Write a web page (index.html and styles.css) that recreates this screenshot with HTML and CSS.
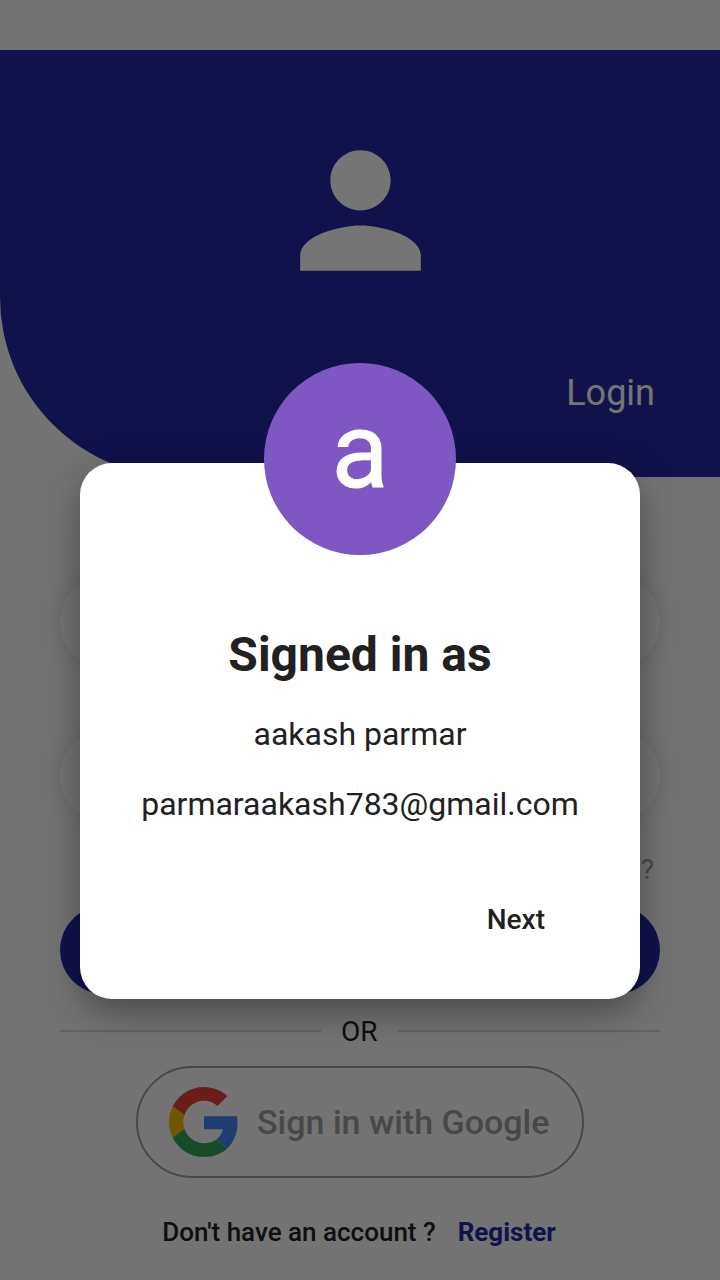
FILE: index.html
```html
<!DOCTYPE html>
<html lang="en">
<head>
<meta charset="utf-8">
<title>Login</title>
<link rel="stylesheet" href="styles.css">
</head>
<body>
<main class="page">
  <header class="hero">
    <svg class="person" viewBox="0 0 24 24"><path d="M12 12c2.21 0 4-1.79 4-4s-1.79-4-4-4-4 1.79-4 4 1.79 4 4 4zm0 2c-2.67 0-8 1.34-8 4v2h16v-2c0-2.66-5.33-4-8-4z"/></svg>
    <h1 class="hero-title">Login</h1>
  </header>
  <section class="form">
    <div class="field"></div>
    <div class="field"></div>
    <div class="forgot">?</div>
    <div class="submit"></div>
    <div class="divider"><span class="line"></span><span class="or">OR</span><span class="line"></span></div>
    <button class="google">
      <svg class="google-logo" viewBox="0 0 48 48"><path fill="#ea4335" d="M24 9.5c3.54 0 6.71 1.22 9.21 3.6l6.85-6.85C35.9 2.38 30.47 0 24 0 14.62 0 6.51 5.38 2.56 13.22l7.98 6.19C12.43 13.72 17.74 9.5 24 9.5z"/><path fill="#4285f4" d="M46.98 24.55c0-1.57-.15-3.09-.38-4.55H24v9.02h12.94c-.58 2.96-2.26 5.48-4.78 7.18l7.73 6c4.51-4.18 7.09-10.36 7.09-17.65z"/><path fill="#fbbc05" d="M10.53 28.59c-.48-1.45-.76-2.99-.76-4.59s.27-3.14.76-4.59l-7.98-6.19C.92 16.46 0 20.12 0 24s.92 7.54 2.56 10.78l7.97-6.19z"/><path fill="#34a853" d="M24 48c6.48 0 11.93-2.13 15.89-5.81l-7.73-6c-2.15 1.45-4.92 2.3-8.16 2.3-6.26 0-11.57-4.22-13.47-9.91l-7.98 6.19C6.51 42.62 14.62 48 24 48z"/></svg>
      <span class="google-text">Sign in with Google</span>
    </button>
    <p class="signup"><span class="ask">Don't have an account ?</span><a class="register">Register</a></p>
  </section>
</main>
<div class="overlay">
  <div class="dialog">
    <div class="avatar">a</div>
    <h2 class="title">Signed in as</h2>
    <p class="name">aakash parmar</p>
    <p class="email">parmaraakash783@gmail.com</p>
    <button class="next">Next</button>
  </div>
</div>
</body>
</html>
```

FILE: styles.css
```css
* { box-sizing: border-box; }
body { margin: 0; font-family: Roboto, sans-serif; background: #fafafa; }
h1, h2, p { margin: 0; font-weight: 400; }
button { font-family: inherit; background: none; border: 0; padding: 0; }
.page { width: 720px; height: 1280px; padding-top: 50px; overflow: hidden; background: #fafafa; }
.hero { height: 426.5px; padding-top: 70px; display: flex; flex-direction: column; align-items: center; background: #2529a5; border-bottom-left-radius: 180px; }
.person { width: 181px; height: 181px; fill: #fff; }
.hero-title { align-self: flex-end; margin: 71px 65px 0 0; font-size: 36px; line-height: 42px; color: #fff; }
.form { display: flex; flex-direction: column; padding: 99.5px 60px 0; }
.field { height: 92px; border-radius: 46px; background: #fbfbfb; box-shadow: 0 0 20px rgba(0, 0, 0, .12); }
.field + .field { margin-top: 62px; }
.forgot { margin: 30px 6px 0 0; text-align: right; font-size: 28px; line-height: 36px; color: #9e9e9e; }
.submit { margin-top: 18px; height: 88px; border-radius: 44px; background: #2529a5; }
.divider { margin-top: 17px; height: 40px; display: flex; align-items: center; gap: 20px; }
.line { flex: 1; height: 2px; background: #d5d5d5; }
.line:first-child { flex: 0 0 261px; }
.or { padding-top: 2px; font-size: 28px; line-height: 40px; color: #222; }
.google { margin-top: 15px; width: 448px; height: 112px; align-self: center; display: flex; align-items: center; gap: 18px; padding-left: 31px; border: 2px solid #9e9e9e; border-radius: 56px; }
.google-logo { width: 70px; height: 70px; }
.google-text { font-size: 34px; font-weight: 500; line-height: 40px; color: #9e9e9e; white-space: nowrap; }
.signup { margin-top: 36px; padding-right: 2px; display: flex; justify-content: center; gap: 22px; font-size: 26px; line-height: 36px; font-weight: 500; color: #222; white-space: nowrap; }
.register { font-weight: 700; color: #2529a5; }
.overlay { position: absolute; inset: 0; height: 1280px; padding-top: 463px; display: flex; justify-content: center; align-items: flex-start; background: rgba(0, 0, 0, .54); }
.dialog { width: 560px; height: 536px; display: flex; flex-direction: column; align-items: center; background: #fff; border-radius: 32px; color: #212121; box-shadow: 0 14px 36px rgba(0, 0, 0, .35); }
.avatar { width: 192px; height: 192px; margin-top: -100px; flex: none; border-radius: 50%; background: #7e57c2; color: #fff; font-size: 105px; line-height: 178px; text-align: center; -webkit-text-stroke: 1px #fff; }
.title { margin-top: 72px; font-size: 48px; line-height: 56px; font-weight: 700; }
.name { margin-top: 32px; font-size: 32px; line-height: 38px; }
.email { margin-top: 32px; font-size: 32px; line-height: 38px; }
.next { align-self: flex-end; margin: 81px 95px 0 0; font-size: 28px; line-height: 32px; font-weight: 500; color: #212121; }
```
